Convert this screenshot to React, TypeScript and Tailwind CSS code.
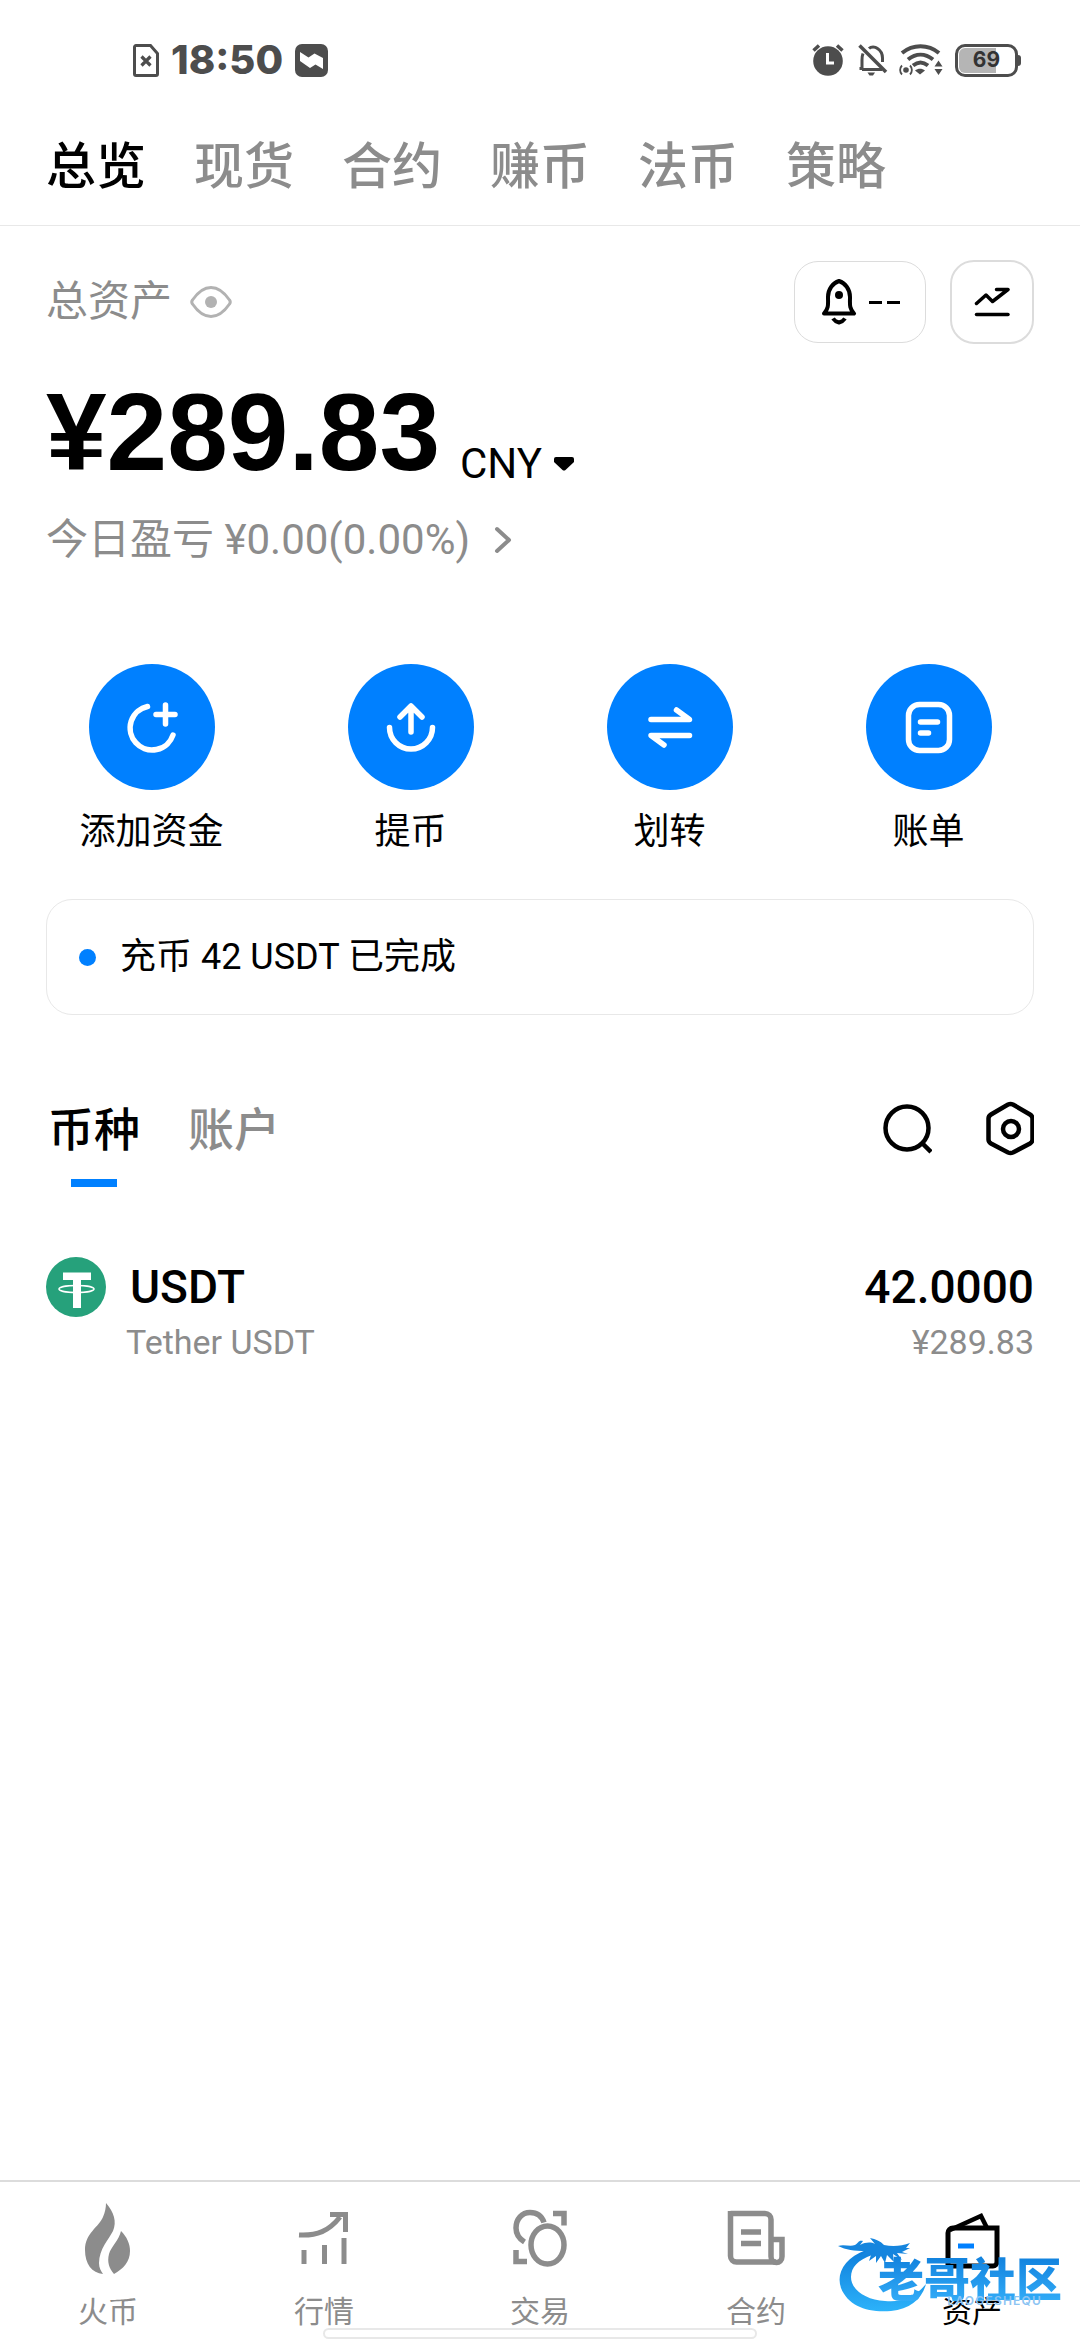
import { ReactNode, useState } from 'react';

const topTabs = ['总览', '现货', '合约', '赚币', '法币', '策略'];

const assets = [
  { symbol: 'USDT', name: 'Tether USDT', amount: '42.0000', value: '¥289.83' },
];

/* ---------- Status bar ---------- */

function StatusBar() {
  return (
    <div className="flex h-[120px] items-center justify-between pl-[133px] pr-[59px] text-[#4d4d4d]">
      <div className="flex items-center">
        <svg className="h-[33px] w-[26px]" viewBox="0 0 26 33" fill="none" stroke="currentColor">
          <path d="M3 1.5h14.5l7 8V30a1.5 1.5 0 0 1-1.5 1.5H3A1.5 1.5 0 0 1 1.5 30V3A1.5 1.5 0 0 1 3 1.5z" strokeWidth="3" />
          <path d="M8.5 12.5l9 9M17.5 12.5l-9 9" strokeWidth="3.2" />
        </svg>
        <span className="ml-3 font-[Inter,sans-serif] text-[40px] leading-[48px] font-extrabold">18:50</span>
        <svg className="ml-3 h-[33px] w-[33px]" viewBox="0 0 33 33">
          <rect width="33" height="33" rx="7" fill="currentColor" />
          <path d="M5 8l8.500 5.500 6-4L28 14v11l-7.500-4.500-5.500 3.500L5 17z" fill="#fff" />
        </svg>
      </div>
      <div className="flex items-center">
        <svg className="h-[32px] w-[32px]" viewBox="0 0 32 32" fill="none">
          <circle cx="16" cy="17" r="14.8" fill="currentColor" />
          <path d="M1.5 6.5L7 1.5M30.5 6.5L25 1.5" stroke="currentColor" strokeWidth="3.5" />
          <path d="M15.5 9v10H22" stroke="#fff" strokeWidth="3" />
        </svg>
        <svg className="ml-[14px] h-[32px] w-[30px]" viewBox="0 0 30 32" fill="none" stroke="currentColor" strokeWidth="3">
          <path d="M1.5 1.5L28 28" strokeWidth="3.5" />
          <path d="M11 4.5C13 2.5 17 2.5 19.5 4.5c3 2 5 5 5 9.5v4" />
          <path d="M5 9.5C4 12 4 14 4 16v8.500H1.5M4 25.5h20" />
          <path d="M9.5 28.5h7.500l-2 3h-3.500z" fill="currentColor" stroke="none" />
        </svg>
        <svg className="ml-[11px] h-[32px] w-[44px]" viewBox="0 0 44 32" fill="none" stroke="currentColor" strokeWidth="4">
          <path d="M3 9c11-9 26-9 37 0M9 15.5c8-6.5 17-6.5 25 0M14 21.5c5-4 10-4 15 0" />
          <path d="M16 26.5c3-2.5 7-2.5 10 0l-5 4z" fill="currentColor" stroke="none" />
          <circle cx="7" cy="26" r="2.8" fill="currentColor" stroke="none" />
          <path d="M3 21.5c-2.500 2.500-2.500 6.500 0 9M11 21.5c2.500 2.500 2.500 6.500 0 9" strokeWidth="1.8" />
          <path d="M35.5 22.5h8l-4-6zM35.5 25h8l-4 6z" fill="currentColor" stroke="none" />
        </svg>
        <div className="ml-3 flex items-center">
          <div className="flex h-[33px] w-[63px] rounded-[10px] border-[3px] border-current p-px">
            <div className="flex h-full w-full items-center justify-center rounded-md bg-linear-to-r from-[#b5b5b5] from-68% to-white to-68% font-[Inter,sans-serif] text-[21px] leading-6 font-bold text-[#333]">
              69
            </div>
          </div>
          <div className="h-[11px] w-[3px] rounded-r-sm bg-[#4d4d4d]" />
        </div>
      </div>
    </div>
  );
}

/* ---------- Actions ---------- */

const actions: { label: string; icon: ReactNode }[] = [
  {
    label: '添加资金',
    icon: (
      <>
        <path d="M58.5 65.5A22 22 0 1 0 84 94" />
        <path d="M76.5 64v19M67 73.5h19" />
      </>
    ),
  },
  {
    label: '提币',
    icon: (
      <>
        <path d="M41.5 86.5a21.5 21.5 0 0 0 43 0" />
        <path d="M63 91V65.5M52 76l11-11 11 11" />
      </>
    ),
  },
  {
    label: '划转',
    icon: (
      <>
        <path d="M44 78.5h38.5L69.5 69" />
        <path d="M82.5 94.5H44l13 9.5" />
      </>
    ),
  },
  {
    label: '账单',
    icon: (
      <>
        <rect x="42.5" y="63.5" width="41" height="46" rx="11" />
        <path d="M54.5 81h17M54.5 92h8" />
      </>
    ),
  },
];

/* ---------- Bottom navigation ---------- */

const navItems: { label: string; icon: ReactNode }[] = [
  {
    label: '火币',
    icon: (
      <g fill="currentColor">
        <path d="M28 1c8 9 11 19 7 28-4 8-14 18-14 32 0 5 2 8 4 11C14 71 7 62 7 48c0-17 14-23 18-33 2-5 3-9 3-14z" />
        <path d="M43 29c6 6 9 13 9 20 0 11-7 18-16 23-5-6-7-12-5-20 2-7 10-14 12-23z" />
      </g>
    ),
  },
  {
    label: '行情',
    icon: (
      <g fill="none" stroke="currentColor" strokeWidth="5">
        <path d="M5 33c18 1 30-4 41-18" />
        <path d="M36 12.5h15.5V30" />
        <path d="M10 48v14M30.5 43v19M50 36v26" />
      </g>
    ),
  },
  {
    label: '交易',
    icon: (
      <g fill="none" stroke="currentColor" strokeWidth="5.5">
        <ellipse cx="37.5" cy="43" rx="16.5" ry="19" />
        <path d="M14.5 40C8 36 6 31 6 26c0-9 6-15.500 14-15.500 7 0 12 4 14 10" />
        <path d="M43 11.5h11v12M6 48v11.5h11" />
      </g>
    ),
  },
  {
    label: '合约',
    icon: (
      <g fill="none" stroke="currentColor" strokeWidth="5.5">
        <path d="M4.5 11.5H39a6 6 0 0 1 6 6v37c0 8 11 8 11 0V37.5H45" />
        <path d="M4.5 9V54a6 6 0 0 0 6 6H50" />
        <path d="M15 30h20M15 41.500h20" />
      </g>
    ),
  },
  {
    label: '资产',
    icon: (
      <g fill="none" stroke="currentColor" strokeWidth="5">
        <path d="M6 61V31a5 5 0 0 1 5-5h44v34a4 4 0 0 1-4 4H6z" />
        <path d="M8 28l31-14 6 12" strokeWidth="4.5" />
        <path d="M16 44h16" stroke="#0080ff" />
      </g>
    ),
  },
];

function Watermark() {
  return (
    <div className="pointer-events-none absolute right-[18px] bottom-[26px] h-[78px] w-[224px]">
      <svg className="h-[78px] w-[100px]" viewBox="0 0 100 78" fill="none">
        <defs>
          <linearGradient id="dragon" x1="0" y1="0" x2="0" y2="1">
            <stop offset="0" stopColor="#0f7fdc" />
            <stop offset="1" stopColor="#2cb2fa" />
          </linearGradient>
        </defs>
        <path
          d="M28 14C6 22-2 38 3 52c7 18 27 25 50 23 19-2 31-12 35-27-10 12-24 19-41 17C28 64 13 54 13 41c0-10 7-17 21-22z"
          fill="url(#dragon)"
        />
        <path
          d="M0 10c6-2 12 1 17-1 4-2 3-5 8-4l-3 4c6-3 11-3 15-1l-5-6c6 1 10 3 14 7 9 2 18 1 26-2l-4 5h4l-8 4 6 2-11-1 5 7-9-6 1 8-7-7-2 8-4-7-5 7v-7l-7 5 2-6-12 2 7-6C16 15 8 14 0 10z"
          fill="#1585de"
        />
      </svg>
      <span className="absolute top-[18px] right-0 bg-linear-to-b from-[#0f7fdc] to-[#35b0fa] bg-clip-text text-[46px] leading-[52px] font-black text-transparent">
        老哥社区
      </span>
      <span className="absolute top-[57px] right-5 font-[Inter,sans-serif] text-[12px] leading-4 font-semibold tracking-widest text-[#8cc4f3]">
        LAOGESHEQU
      </span>
    </div>
  );
}

function BottomNav() {
  return (
    <nav className="relative mt-auto h-[160px] border-t-2 border-[#dcdcdc] bg-white">
      <ul className="grid grid-cols-5">
        {navItems.map((item, i) => (
          <li key={item.label}>
            <a
              href="#"
              className={`flex flex-col items-center pt-5 text-[30px] leading-9 ${i === 4 ? 'text-black' : 'text-[#8c8c8c]'}`}
            >
              <svg className="h-[72px] w-[60px]" viewBox="0 0 60 72">
                {item.icon}
              </svg>
              <span className="mt-5">{item.label}</span>
            </a>
          </li>
        ))}
      </ul>
      <div className="absolute bottom-px left-1/2 h-[11px] w-[434px] -translate-x-1/2 rounded-full border-2 border-[#e8e8e8] bg-white" />
      <Watermark />
    </nav>
  );
}

/* ---------- Page ---------- */

export default function App() {
  const [topTab, setTopTab] = useState('总览');
  const [listTab, setListTab] = useState('币种');

  return (
    <div className="flex min-h-screen flex-col bg-white font-[Roboto,'Noto_Sans_CJK_SC',sans-serif] text-black">
      <StatusBar />

      <nav className="flex h-[106px] gap-12 border-b border-[#e8e8e8] px-[46px] pb-3">
        {topTabs.map((tab) => (
          <button
            key={tab}
            onClick={() => setTopTab(tab)}
            className={`text-[50px] leading-[60px] font-medium ${tab === topTab ? 'text-black' : 'text-[#8c8c8c]'}`}
          >
            {tab}
          </button>
        ))}
      </nav>

      <main className="pt-[34px]">
        {/* Balance */}
        <section className="px-[46px]">
          <div className="flex h-[84px] items-center">
            <h1 className="text-[42px] leading-[48px] text-[#8c8c8c]">总资产</h1>
            <button aria-label="隐藏资产" className="ml-[18px] text-[#b2b2b2]">
              <svg className="h-[32px] w-[42px]" viewBox="0 0 42 32" fill="none" stroke="currentColor" strokeWidth="3">
                <path d="M2.5 14C8 6 14 1.5 21 1.5S34 6 39.5 14q1.5 2 0 4C34 26 28 30.5 21 30.5S8 26 2.5 18q-1.5-2 0-4z" />
                <circle cx="21" cy="16" r="6" fill="currentColor" stroke="none" />
              </svg>
            </button>
            <button className="ml-auto flex h-[82px] w-[132px] items-center justify-center gap-3 rounded-3xl border border-[#dcdcdc]">
              <svg className="h-[46px] w-[36px]" viewBox="0 0 36 46" fill="none" stroke="currentColor" strokeWidth="4">
                <path d="M3 34.5C8 29 7 25 7 18c0-8 5-14 11-16 6 2 11 8 11 16 0 7-1 11 4 16.5z" strokeLinejoin="round" />
                <circle cx="18" cy="16" r="4" fill="currentColor" stroke="none" />
                <path d="M12 39.5q2 3 6 4 4-1 6-4" />
              </svg>
              <span className="flex gap-[5px]" role="img" aria-label="--">
                <span className="h-[3px] w-[13px] bg-black" />
                <span className="h-[3px] w-[13px] bg-black" />
              </span>
            </button>
            <button
              aria-label="资产走势"
              className="ml-6 flex h-[84px] w-[84px] items-center justify-center rounded-3xl border-2 border-[#dcdcdc]"
            >
              <svg className="h-[30px] w-[36px]" viewBox="0 0 36 30" fill="none" stroke="currentColor" strokeWidth="3.5" strokeLinecap="round" strokeLinejoin="round">
                <path d="M2.5 16.5L12 8l6.500 6.500L34 2.5H22.5" />
                <path d="M2.5 27.5H34" />
              </svg>
            </button>
          </div>

          <div className="mt-8 flex items-end">
            <p className="font-['Liberation_Sans',sans-serif] text-[109px] leading-[112px] font-bold">¥289.83</p>
            <button className="ml-5 flex items-center gap-3 text-[42px] leading-[48px]">
              CNY
              <svg className="h-[14px] w-[20px]" viewBox="0 0 20 14">
                <path d="M2 0h16q2 0 2 2v3l-8.500 8q-1.500 1-3 0L0 5V2q0-2 2-2z" />
              </svg>
            </button>
          </div>

          <button className="mt-7 flex items-center text-[42px] leading-[48px] text-[#8c8c8c]">
            今日盈亏 ¥0.00(0.00%)
            <svg className="ml-6 h-[28px] w-[18px]" viewBox="0 0 18 28" fill="none" stroke="currentColor" strokeWidth="4" strokeLinecap="round" strokeLinejoin="round">
              <path d="M3 3l12 11L3 25" />
            </svg>
          </button>
        </section>

        {/* Quick actions */}
        <section className="mt-[100px] grid grid-cols-4 px-[22px]">
          {actions.map((action) => (
            <button key={action.label} className="flex flex-col items-center text-[36px] leading-10">
              <span className="rounded-full bg-[#0080ff]">
                <svg
                  className="h-[126px] w-[126px]"
                  viewBox="0 23 126 126"
                  fill="none"
                  stroke="#fff"
                  strokeWidth="5.5"
                  strokeLinecap="round"
                  strokeLinejoin="round"
                >
                  {action.icon}
                </svg>
              </span>
              <span className="mt-[22px]">{action.label}</span>
            </button>
          ))}
        </section>

        {/* Notice */}
        <div className="mx-[46px] mt-[47px] flex h-[116px] items-center gap-6 rounded-[26px] border border-[#e8e8e8] px-8 text-[36px] leading-10">
          <span className="h-[17px] w-[17px] rounded-full bg-[#0080ff]" />
          充币 42 USDT 已完成
        </div>

        {/* Assets */}
        <section className="mt-[86px] px-[46px]">
          <div className="flex items-start justify-between">
            <div className="flex gap-11">
              {['币种', '账户'].map((tab) => (
                <button
                  key={tab}
                  onClick={() => setListTab(tab)}
                  className={`flex flex-col items-center gap-5 px-0.5 text-[46px] leading-[58px] font-medium ${tab === listTab ? 'text-black' : 'text-[#8c8c8c]'}`}
                >
                  {tab}
                  <span className={`h-2 w-[46px] ${tab === listTab ? 'bg-[#0080ff]' : ''}`} />
                </button>
              ))}
            </div>
            <div className="flex gap-[52px]">
              <button aria-label="搜索">
                <svg className="h-[56px] w-[50px]" viewBox="0 0 50 56" fill="none" stroke="currentColor" strokeWidth="4.5">
                  <circle cx="25" cy="27" r="21.5" />
                  <path d="M40 42l9 9" />
                </svg>
              </button>
              <button aria-label="设置">
                <svg className="h-[56px] w-[50px]" viewBox="0 0 50 56" fill="none" stroke="currentColor" strokeWidth="4.5">
                  <path d="M24 3.5q2.500-1 5 0l17 10q2.500 1.500 2.500 4v21q0 2.500-2.500 4l-17 9q-2.500 1-5 0l-17-9q-2.500-1.500-2.500-4v-21q0-2.500 2.500-4z" />
                  <circle cx="27" cy="28" r="8" />
                </svg>
              </button>
            </div>
          </div>

          <ul className="mt-[70px]">
            {assets.map((asset) => (
              <li key={asset.symbol} className="flex items-start">
                <svg className="h-[60px] w-[60px]" viewBox="0 0 60 60">
                  <circle cx="30" cy="30" r="30" fill="#26a17b" />
                  <ellipse cx="30.5" cy="32" rx="17.5" ry="3.5" fill="none" stroke="#fff" strokeWidth="1.5" />
                  <path d="M17 15.5h28V23H35v28h-8V23H17z" fill="#fff" />
                </svg>
                <div className="ml-5 flex flex-col">
                  <span className="pl-1 text-[46px] leading-[60px] font-medium">{asset.symbol}</span>
                  <span className="text-[34px] leading-[50px] text-[#8c8c8c]">{asset.name}</span>
                </div>
                <div className="ml-auto flex flex-col text-right">
                  <span className="text-[46px] leading-[60px] font-medium">{asset.amount}</span>
                  <span className="text-[34px] leading-[50px] text-[#8c8c8c]">{asset.value}</span>
                </div>
              </li>
            ))}
          </ul>
        </section>
      </main>

      <BottomNav />
    </div>
  );
}
